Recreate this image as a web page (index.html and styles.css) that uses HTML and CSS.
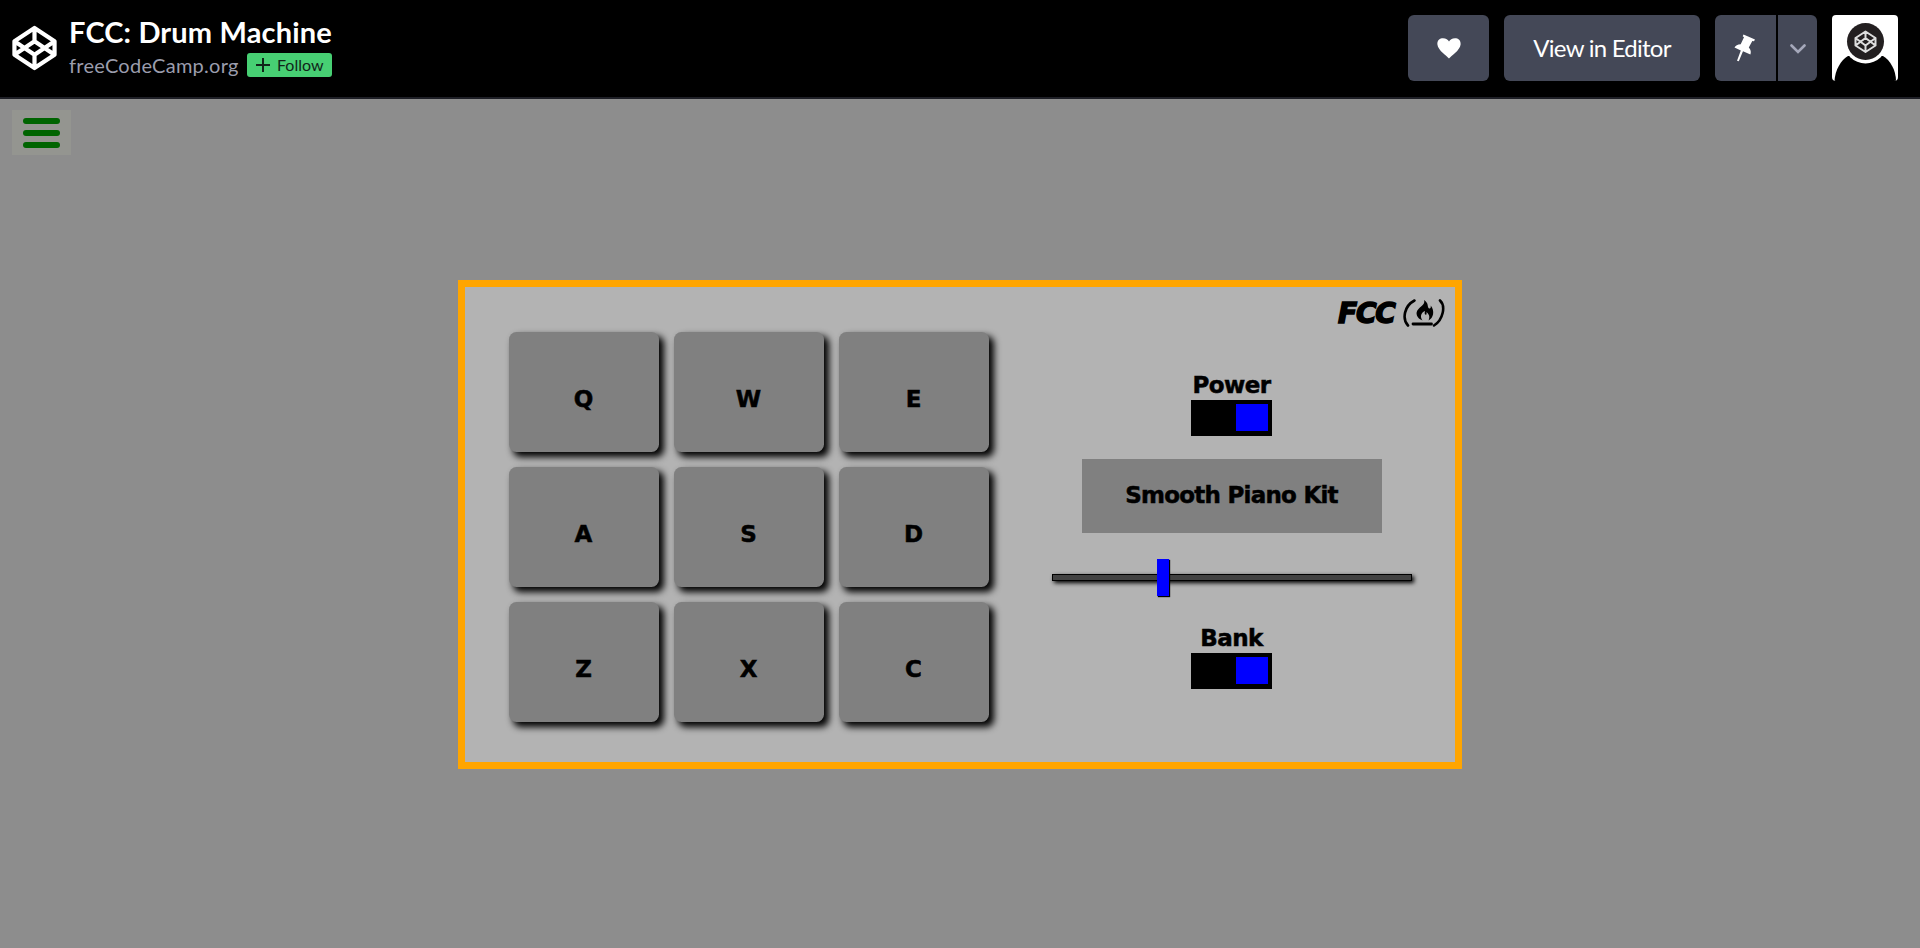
FILE: index.html
```html
<!DOCTYPE html>
<html lang="en">
<head>
<meta charset="utf-8">
<title>FCC: Drum Machine</title>
<link rel="stylesheet" href="styles.css">
</head>
<body>
<header class="topbar">
  <svg class="brand" viewBox="0 0 46 46" fill="none" stroke="#fff" stroke-width="4.300" stroke-linejoin="round"><path d="M23 2.500 L43.500 16 V30 L23 43.500 L2.500 30 V16 Z M23 2.500 V16 M23 30 V43.500 M2.500 16 L23 30 L43.500 16 M2.500 30 L23 16 L43.500 30"/></svg>
  <div class="titles">
    <h1 class="title">FCC: Drum Machine</h1>
    <div class="byline"><span class="author">freeCodeCamp.org</span><button class="follow"><svg width="16" height="16" viewBox="0 0 16 16"><path d="M8 1V15M1 8H15" stroke="#11251a" stroke-width="2"/></svg><span>Follow</span></button></div>
  </div>
  <div class="actions">
    <button class="btn heart"><svg width="24" height="21" viewBox="0 0 24 21"><path fill="#fff" d="M12 20.500 C10 18 1 12.500 .4 6.500 C0 2 3 .2 6 .2 C9 .2 11 1.800 12 3.400 C13 1.800 15 .2 18 .2 C21 .2 24 2 23.600 6.500 C23 12.500 14 18 12 20.500Z"/></svg></button>
    <button class="btn view">View in Editor</button>
    <div class="split">
      <button class="btn pin"><svg width="22" height="28" viewBox="0 0 22 28"><path fill="#fff" d="M9.500 .5 L21 5.500 L20 7.300 L18.300 6.900 L14.800 13.500 C17 15.800 17.200 18 16.400 20.600 L9 17.300 L4.800 27.300 L3 26.700 L6.800 16.400 L.5 13.600 C1.500 11.500 3.500 10.300 6.700 10.200 L10 3.200 L8.700 2.300Z"/></svg></button>
      <button class="btn more"><svg width="16" height="10" viewBox="0 0 16 10"><path d="M1.500 1.500L8 8L14.500 1.500" fill="none" stroke="#a5a8ba" stroke-width="2.600" stroke-linecap="round"/></svg></button>
    </div>
    <svg class="avatar" viewBox="0 0 66 66"><rect width="66" height="66" fill="#fff"/><path d="M2.500 66C3 55 9 45 16 41L51 41C58 45 64 55 64 66Z" fill="#000"/><circle cx="33.500" cy="27" r="21.500" fill="#fff"/><circle cx="33.500" cy="26.500" r="18.500" fill="#231f20"/><path d="M33.500 16.500L43.500 23V30.500L33.500 37L23.500 30.500V23ZM33.500 16.500V23M33.500 30.500V37M23.500 23L33.500 30.500L43.500 23M23.500 30.500L33.500 23L43.500 30.500" fill="none" stroke="#ddd" stroke-width="2" stroke-linejoin="round"/></svg>
  </div>
</header>
<main class="stage">
  <button class="menu"><i></i><i></i><i></i></button>
  <section class="machine">
    <div class="pads">
      <button class="pad">Q</button><button class="pad">W</button><button class="pad">E</button>
      <button class="pad">A</button><button class="pad">S</button><button class="pad">D</button>
      <button class="pad">Z</button><button class="pad">X</button><button class="pad">C</button>
    </div>
    <div class="side">
      <div class="logo"><span class="fcc">FCC</span><svg width="42" height="28" viewBox="0 0 42 28"><path d="M11.500 1.500C1 7 -1 20 5 26.500M37 1.500C43 7 40 21 31 26.500" fill="none" stroke="#000" stroke-width="2.600" stroke-linecap="round"/><path d="M10 25H28.500" stroke="#000" stroke-width="2.800" stroke-linecap="round"/><path d="M21 1C26 4 24 8 26 9.500C27.500 10 28 8.500 27.700 6.500C32 12 30.500 19 25.500 21.500C27.500 17 25.500 15 23.500 13C24 16 22.500 16.500 21.800 15C21.500 13.500 22 12.500 22 12C17.500 14 17 18 19.500 21.500C14 19.500 11.500 14 15.500 10C18.500 6.500 22.500 5 21 1Z"/></svg></div>
      <div class="label power">Power</div>
      <div class="switch"><i></i></div>
      <div class="display">Smooth Piano Kit</div>
      <div class="slider"><i></i></div>
      <div class="label bank">Bank</div>
      <div class="switch"><i></i></div>
    </div>
  </section>
</main>
</body>
</html>
```
FILE: styles.css
```css
* { box-sizing: border-box; }
body { margin: 0; height: 948px; display: flex; flex-direction: column; overflow: hidden; background: #8d8d8d; font-family: Lato, sans-serif; }
button { border: 0; padding: 0; margin: 0; font: inherit; }
svg { display: block; flex: none; }
.topbar { height: 99px; flex: none; display: flex; align-items: flex-start; background: #000; border-bottom: 2px solid #1e1f26; padding: 15px 22px 0 12px; }
.brand { width: 45px; height: 46px; margin-top: 10px; }
.titles { margin-left: 12px; }
.title { margin: -1px 0 0; height: 36px; font-size: 29px; line-height: 36px; font-weight: 700; letter-spacing: .15px; color: #fff; white-space: nowrap; }
.byline { display: flex; align-items: flex-start; height: 26px; margin-top: 3px; }
.author { width: 178px; margin-top: -1px; font-size: 20px; line-height: 26px; color: #9b9dad; letter-spacing: .25px; white-space: nowrap; }
.follow { width: 85px; height: 24px; display: flex; align-items: center; gap: 6px; padding: 0 0 1px 8px; border-radius: 3px; background: #47cf73; color: #11251a; font-size: 16px; }
.follow span { margin-top: -1px; }
.actions { margin-left: auto; display: flex; gap: 15px; }
.btn { height: 66px; border-radius: 6px; background: #444857; color: #fff; display: flex; align-items: center; justify-content: center; }
.heart { width: 81px; }
.view { width: 196px; font-size: 24px; letter-spacing: -.75px; padding-bottom: 2px; }
.split { display: flex; gap: 2px; }
.pin { width: 61px; padding-right: 1px; border-radius: 6px 0 0 6px; }
.more { width: 39px; padding-top: 2px; border-radius: 0 6px 6px 0; }
.avatar { width: 66px; height: 66px; border-radius: 4px; }
.stage { flex: 1; padding: 11px 0 0 12px; }
.menu { width: 59px; height: 45px; display: flex; flex-direction: column; align-items: center; justify-content: center; gap: 6px; padding-top: 1px; background: #949590; }
.menu i { width: 37px; height: 6px; border-radius: 3px; background: #006400; }
.machine { width: 1004px; height: 489px; margin: 125px 0 0 446px; border: 7px solid orange; background: #b3b3b3; display: flex; font-family: "DejaVu Sans", sans-serif; font-weight: 700; color: #000; }
.pads { display: grid; grid-template-columns: repeat(3, 150px); grid-auto-rows: 120px; gap: 15px; margin: 45px 0 0 44px; align-self: flex-start; }
.pad { border-radius: 7.5px; background: #808080; box-shadow: 4.5px 4.5px 7.5px #000; font-size: 23px; padding: 13px 1px 0 0; color: #000; -webkit-text-stroke: .5px #000; }
.side { width: 406px; margin-left: 40px; display: flex; flex-direction: column; align-items: center; }
.logo { align-self: flex-end; display: flex; align-items: flex-start; height: 76px; padding-top: 12px; margin-right: -10px; }
.fcc { width: 65px; font-size: 28px; line-height: 30px; font-style: italic; letter-spacing: -1.2px; -webkit-text-stroke: 1.6px #000; }
.label { height: 37px; padding-top: 4px; line-height: 37px; font-size: 23px; letter-spacing: -.6px; margin-right: 1px; white-space: nowrap; -webkit-text-stroke: .5px #000; }
.switch { width: 81px; height: 36px; margin-right: 1px; background: #000; padding: 4px 4px 5px 45px; }
.switch i { display: block; width: 32px; height: 27px; background: #00f; }
.display { width: 300px; height: 74px; line-height: 72px; margin-top: 23px; padding-right: 1px; background: #808080; text-align: center; font-size: 23px; letter-spacing: -.75px; white-space: nowrap; -webkit-text-stroke: .5px #000; }
.slider { width: 360px; height: 7px; margin-top: 41px; border: 1px solid #000; background: #424242; box-shadow: 2px 2px 4px #000; padding-left: 104px; }
.slider i { display: block; width: 12px; height: 37px; margin-top: -16px; background: #00f; box-shadow: 1px 1px 1px #000; }
.bank { margin-top: 35px; }
```
